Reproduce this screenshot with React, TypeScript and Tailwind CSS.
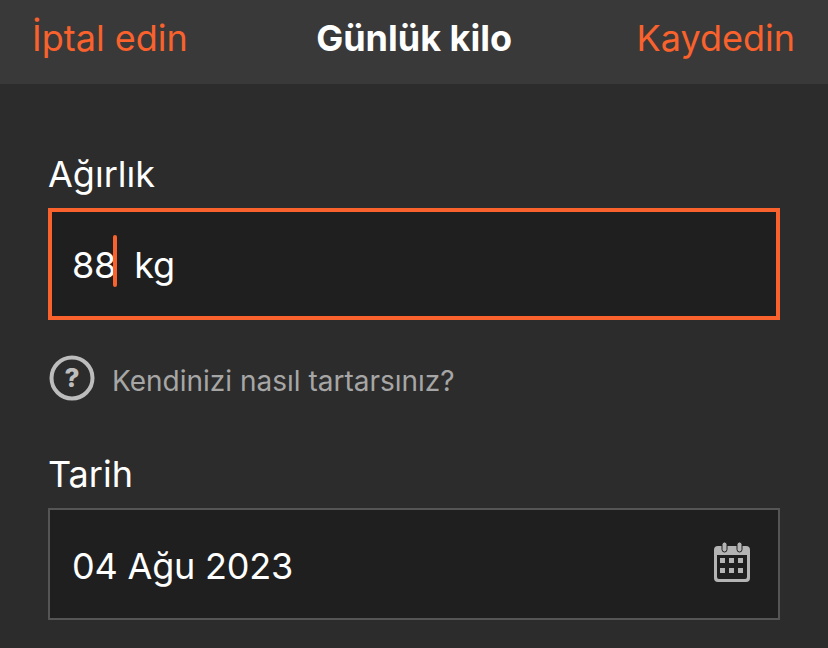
const CalendarIcon = () => (
  <svg width="38" height="42" viewBox="0 0 38 42" fill="none">
    <path d="M5 5h28a4 4 0 0 1 4 4v28a4 4 0 0 1-4 4H5a4 4 0 0 1-4-4V9a4 4 0 0 1 4-4zM4 14v22a2 2 0 0 0 2 2h26a2 2 0 0 0 2-2V14z" fill="#b4b4b4" fillRule="evenodd" />
    <rect x="9" y="1" width="5" height="10" rx="2.5" fill="#b4b4b4" stroke="#1f1f1f" strokeWidth="1" />
    <rect x="24" y="1" width="5" height="10" rx="2.5" fill="#b4b4b4" stroke="#1f1f1f" strokeWidth="1" />
    <rect x="7" y="17" width="5" height="5" fill="#b4b4b4" />
    <rect x="16" y="17" width="5" height="5" fill="#b4b4b4" />
    <rect x="25" y="17" width="5" height="5" fill="#b4b4b4" />
    <rect x="7" y="27" width="5" height="5" fill="#b4b4b4" />
    <rect x="16" y="27" width="5" height="5" fill="#b4b4b4" />
    <rect x="25" y="27" width="5" height="5" fill="#b4b4b4" />
  </svg>
);

export default function App() {
  return (
    <div className="h-[648px] w-[828px] overflow-hidden bg-[#2c2c2c] font-['Inter',sans-serif] text-white">
      {/* Header */}
      <header className="flex h-[84px] items-center justify-between bg-[#393939] pl-[32px] pr-[33px] pb-[8px] text-[36px]">
        <span className="text-[#f9622c]">İptal edin</span>
        <span className="pl-[4px] font-bold">Günlük kilo</span>
        <span className="text-[#f9622c]">Kaydedin</span>
      </header>

      <main className="flex flex-col px-[48px] pt-[69px]">
        <label className="text-[36px] leading-[42px]">Ağırlık</label>

        <div className="mt-[13px] flex h-[112px] items-center border-[4px] border-[#f9622c] bg-[#1f1f1f] pl-[20px] text-[36px] tracking-[-0.2px]">
          <span className="pt-[2px]">88</span>
          <span className="ml-[-3px] mb-[6px] h-[52px] w-[4px] rounded-full bg-[#f9622c]" />
          <span className="ml-[17px] pt-[2px]">kg</span>
        </div>

        <div className="mt-[34px] flex items-center">
          <svg width="46" height="46" viewBox="0 0 46 46" fill="none" className="ml-[1px]">
            <circle cx="23" cy="23" r="20.5" stroke="#bdbdbd" strokeWidth="4" />
            <text x="23" y="32" textAnchor="middle" fill="#bdbdbd" fontSize="26" fontWeight="800" fontFamily="Inter, sans-serif">?</text>
          </svg>
          <span className="ml-[17px] pt-[6px] text-[28px] text-[#a6a6a6]">Kendinizi nasıl tartarsınız?</span>
        </div>

        <label className="mt-[51px] text-[36px] leading-[42px]">Tarih</label>

        <div className="mt-[13px] flex h-[112px] items-center justify-between border-2 border-[#555555] bg-[#1f1f1f] pl-[22px] pr-[27px] text-[36px] tracking-[-0.2px]">
          <span className="pt-[4px]">04 Ağu 2023</span>
          <span className="mb-[4px]">
            <CalendarIcon />
          </span>
        </div>
      </main>
    </div>
  );
}
